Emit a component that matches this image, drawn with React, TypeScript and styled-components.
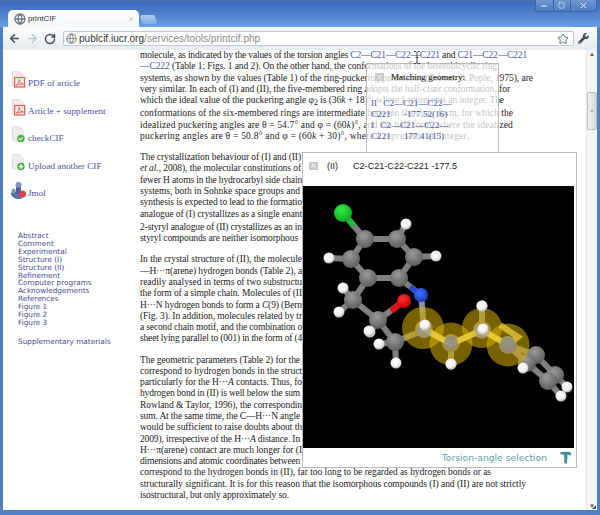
import React, { useLayoutEffect, useRef } from 'react'
import styled, { createGlobalStyle } from 'styled-components'
import { ArrowLeft, ArrowRight, RotateCw, Star, Globe, X, Minus, Square } from 'lucide-react'
import { FaWrench } from 'react-icons/fa'

const Global = createGlobalStyle`
  html, body { margin: 0; padding: 0; background: #fff; }
`
const Window = styled.div`
  width: 600px;
  height: 515px;
  display: flex;
  flex-direction: column;
  overflow: hidden;
  background: #4f80c4;
  font-family: "Liberation Serif", serif;
`
const TitleBar = styled.div`
  height: 27px;
  flex: none;
  display: flex;
  align-items: flex-end;
  gap: 2px;
  padding: 0 4px 0 8px;
  position: relative;
  background: linear-gradient(#56749c 0, #3d6cc0 2px, #4a7cc9 12px, #6c9fdf 27px);
`
const Tab = styled.div`
  width: 121px;
  height: 17px;
  display: flex;
  align-items: center;
  gap: 2px;
  padding: 0 4px 0 6px;
  border-radius: 5px 5px 0 0;
  background: linear-gradient(#fff, #f4f6f9);
  font: 8px "Liberation Sans", sans-serif;
  color: #333;
`
const TabTitle = styled.span`
  flex: 1;
`
const NewTab = styled.div`
  width: 15px;
  height: 9px;
  margin-bottom: 3px;
  transform: skewX(14deg);
  border-radius: 2px;
  background: linear-gradient(#a9c8ef, #83aee4);
`
const WindowControls = styled.div`
  position: absolute;
  top: 0;
  right: 3px;
  width: 60px;
  height: 11px;
  display: flex;
  border: 1px solid #3a64a4;
  border-top: none;
  border-radius: 0 0 3px 3px;
  background: linear-gradient(#6f97cf, #4d7dc2);
  color: #e8f0fa;
`
const ControlButton = styled.div<{ $wide?: boolean }>`
  flex: ${p => (p.$wide ? 1.5 : 1)};
  display: flex;
  align-items: center;
  justify-content: center;
  & + & { border-left: 1px solid #3a64a4; }
`
const Toolbar = styled.div`
  height: 23px;
  flex: none;
  display: flex;
  align-items: center;
  margin: 0 3px;
  padding: 0 5px 0 2px;
  background: linear-gradient(#fbfcfd, #e8ebf0);
  color: #555;
`
const NavButton = styled.div<{ $off?: boolean }>`
  width: 18px;
  display: flex;
  justify-content: center;
  color: ${p => (p.$off ? '#c4c8ce' : '#4b4f55')};
`
const Omnibox = styled.div`
  height: 15px;
  margin-left: 4px;
  flex: 1;
  display: flex;
  align-items: center;
  gap: 2px;
  padding: 0 4px 0 2px;
  box-sizing: border-box;
  background: #fff;
  border: 1px solid #c3c9d2;
  border-radius: 2px;
  font: 10.1px "Liberation Sans", sans-serif;
  color: #8b8b8b;
  white-space: nowrap;
`
const Host = styled.span`
  color: #333;
`
const UrlText = styled.span`
  flex: 1;
`
const Content = styled.div`
  flex: 1;
  position: relative;
  display: flex;
  margin: 0 3px 5px;
  background: #fff;
  overflow: hidden;
`
const Sidebar = styled.nav`
  width: 137px;
  flex: none;
  box-sizing: border-box;
  padding: 21px 0 0 9px;
`
const ToolLink = styled.div`
  height: 27.6px;
  display: flex;
  align-items: flex-start;
  font-size: 9.2px;
  color: #4d4f9e;
  white-space: nowrap;
`
const ToolText = styled.span`
  margin-top: 7px;
`
const SectionList = styled.div`
  margin: 23px 0 0 6px;
  font: 7.3px/7.9px "DejaVu Sans", sans-serif;
  color: #4c4a94;
`
const SectionGap = styled.div`
  margin-top: 11px;
`
const Article = styled.article`
  flex: 1;
  overflow: hidden;
  font-size: 9.5px;
  color: #222;
`
const Para = styled.div`
  margin-bottom: 9.8px;
`
const LineRow = styled.div<{ $tall?: boolean }>`
  height: 11.3px;
  line-height: 11.3px;
  overflow: hidden;
  white-space: nowrap;
  margin-top: ${p => (p.$tall ? '2px' : '0')};
`
const Ref = styled.span`
  color: #4a55b0;
`
const Sub = styled.span`
  font-size: 8px;
  position: relative;
  top: 2px;
`
const Scrollbar = styled.div`
  width: 10px;
  flex: none;
  display: flex;
  flex-direction: column;
  align-items: center;
  justify-content: space-between;
  position: relative;
  background: #f4f5f6;
  border-left: 1px solid #e4e6e8;
  font-size: 6px;
  color: #555;
  line-height: 8px;
`
const Thumb = styled.div`
  position: absolute;
  top: 42px;
  left: 0;
  right: 0;
  height: 38px;
  display: flex;
  align-items: center;
  justify-content: center;
  box-sizing: border-box;
  border: 1px solid #bcc0c5;
  border-radius: 2px;
  background: linear-gradient(90deg, #f2f2f2, #d6d8da);
  color: #8a8a8a;
`
const Popup = styled.div`
  position: absolute;
  box-sizing: border-box;
  border: 1px solid #b9b9b9;
`
const MatchPopup = styled(Popup)`
  left: 363px;
  top: 13px;
  width: 133px;
  height: 101px;
  padding: 6px 0 0 4px;
  background: rgba(255, 255, 255, 0.72);
  color: #222;
`
const PopupHead = styled.div`
  height: 14px;
  display: flex;
  align-items: center;
  padding-left: 4px;
  font-size: 9.1px;
  -webkit-text-stroke: 0.1px #222;
`
const CloseBox = styled.div`
  width: 9px;
  height: 8px;
  flex: none;
  display: flex;
  align-items: center;
  justify-content: center;
  background: #c9c9c9;
  color: #fff;
`
const MatchTitle = styled.span`
  margin-left: 7px;
`
const MatchList = styled.div`
  margin-top: 13.5px;
  font-size: 9.1px;
  color: #4a55b0;
  line-height: 11.3px;
  word-spacing: 4px;
`
const MatchValue = styled.span`
  margin-left: 7px;
`
const ViewerPopup = styled(Popup)`
  left: 299px;
  top: 102px;
  width: 275px;
  height: 316px;
  background: #fff;
  display: flex;
  flex-direction: column;
`
const ViewerHead = styled.div`
  height: 33px;
  flex: none;
  box-sizing: border-box;
  display: flex;
  align-items: center;
  padding: 0 0 8px 6px;
  font: 9.1px "Liberation Sans", sans-serif;
  color: #222;
`
const ViewerTag = styled.span`
  margin-left: 9px;
  width: 26px;
`
const Canvas = styled.div`
  width: 271px;
  height: 262px;
  flex: none;
  background: #000;
`
const ViewerFoot = styled.div`
  flex: 1;
  display: flex;
  align-items: center;
  justify-content: flex-end;
  gap: 12px;
  padding: 0 4px 0 0;
  font: 9.2px "DejaVu Sans", sans-serif;
  color: #5f9fa8;
`
const Cursor = styled.svg`
  position: absolute;
  left: 410px;
  top: 1px;
`
const Grip = styled.svg`
  position: absolute;
  right: 0;
  bottom: 0;
`
const JmolMark = styled.svg`
  margin-left: -2px;
`

// the text is tracked at run time so the line stops where it stops in the picture
const Line = ({ end, tall, children }: { end: number; tall?: boolean; children: React.ReactNode }) => {
  const ref = useRef<HTMLSpanElement>(null)
  useLayoutEffect(() => {
    const el = ref.current
    if (!el) return
    const natural = el.getBoundingClientRect().width
    el.style.letterSpacing = `${(end - natural) / (el.textContent || ' ').length}px`
  }, [end])
  return (
    <LineRow $tall={tall}>
      <span ref={ref}>{children}</span>
    </LineRow>
  )
}

const DocIcon = ({ kind }: { kind: 'pdf' | 'ok' | 'plus' }) => (
  <svg width="16" height="18" viewBox="0 0 16 18">
    <path d="M.5.5h7l3.500 3.500v11H.5z" fill="#ededed" stroke="#dedede" />
    {kind === 'pdf' && (
      <g>
        <rect x="2.600" y="6.500" width="10" height="9.500" fill="#fbeaea" stroke="#e2645e" strokeWidth="1.300" />
        <path d="M4 14.500c2-1 3.200-3.500 3-6 .4 2.500 2 4 4.500 4.500-2.500-.2-5.500.2-7.500 1.500z" fill="none" stroke="#e2645e" strokeWidth="1" />
      </g>
    )}
    {kind === 'ok' && (
      <g>
        <circle cx="9" cy="12.500" r="3.700" fill="#48b13f" />
        <path d="M7 12.500l1.500 1.500 2.500-3" fill="none" stroke="#fff" strokeWidth="1.100" />
      </g>
    )}
    {kind === 'plus' && (
      <g>
        <circle cx="9" cy="12.500" r="3.700" fill="#48b13f" />
        <path d="M9 10.300v4.400M6.800 12.500h4.400" stroke="#fff" strokeWidth="1.400" />
      </g>
    )}
  </svg>
)

const JmolIcon = () => (
  <JmolMark width="18" height="20" viewBox="0 0 18 20">
    <path d="M1 12c2-2 4-2 6-1l6 2c1 3-1 5-4 5-4 0-8-2-8-6z" fill="#5a6fb0" />
    <rect x="6" y="2" width="5" height="11" rx="2.500" fill="#4a5ca8" />
    <circle cx="8.500" cy="4" r="3" fill="#7f8fce" />
    <circle cx="12.500" cy="13" r="3.500" fill="#e0404a" />
    <circle cx="3.500" cy="10" r="2.200" fill="#8a94b8" />
  </JmolMark>
)

const bonds: [number, number, number, number][] = [
  [343, 213, 365, 239], [365, 239, 397, 239], [397, 239, 406, 224], [397, 239, 414, 257],
  [414, 257, 436, 256], [414, 257, 399, 278], [399, 278, 368, 278], [368, 278, 351, 259],
  [351, 259, 365, 239], [351, 259, 329, 258], [399, 278, 421, 295], [368, 278, 353, 300],
  [353, 300, 343, 288], [353, 300, 339, 312], [353, 300, 378, 320], [378, 320, 404, 301],
  [378, 320, 370, 332], [378, 320, 395, 342], [395, 342, 379, 344], [395, 342, 396, 363],
  [395, 342, 424, 330], [421, 295, 424, 330], [424, 330, 451, 344], [451, 344, 451, 364],
  [451, 344, 482, 330], [482, 330, 482, 306], [482, 330, 508, 345], [508, 345, 527, 363],
  [527, 363, 548, 381], [508, 345, 536, 355], [536, 355, 555, 375], [548, 381, 555, 375],
  [548, 381, 561, 396], [555, 375, 567, 387],
]

const carbons: [number, number][] = [
  [365, 239], [397, 239], [414, 257], [399, 278], [368, 278], [351, 259],
  [353, 300], [378, 320], [395, 342], [424, 329], [451, 343], [482, 330],
  [508, 345], [536, 355], [555, 375], [548, 381], [527, 363],
]

const hydrogens: [number, number][] = [
  [406, 224], [436, 256], [329, 258], [343, 288], [339, 312], [370, 332], [379, 344], [396, 363],
  [369, 331], [425, 326], [451, 364], [482, 306], [483, 330], [523, 368], [561, 396], [567, 387],
]

const Molecule = () => (
  <svg width="271" height="262" viewBox="303 186 271 262">
    <defs>
      <radialGradient id="c" cx="42%" cy="32%" r="72%">
        <stop offset="0" stopColor="#9a9a9a" />
        <stop offset="1" stopColor="#5a5a5a" />
      </radialGradient>
      <radialGradient id="h" cx="42%" cy="38%" r="70%">
        <stop offset="0" stopColor="#fff" />
        <stop offset="0.6" stopColor="#eee" />
        <stop offset="1" stopColor="#a0a0a0" />
      </radialGradient>
      <radialGradient id="cl" cx="40%" cy="35%" r="70%">
        <stop offset="0" stopColor="#30f040" />
        <stop offset="1" stopColor="#10a020" />
      </radialGradient>
      <radialGradient id="n" cx="40%" cy="35%" r="70%">
        <stop offset="0" stopColor="#4070ff" />
        <stop offset="1" stopColor="#1838c0" />
      </radialGradient>
      <radialGradient id="o" cx="40%" cy="35%" r="70%">
        <stop offset="0" stopColor="#ff3030" />
        <stop offset="1" stopColor="#c00000" />
      </radialGradient>
    </defs>
    {bonds.map(([a, b, c, d], i) => (
      <line key={i} x1={a} y1={b} x2={c} y2={d} stroke="#808080" strokeWidth="6" />
    ))}
    <line x1="343" y1="213" x2="354" y2="226" stroke="#20c030" strokeWidth="6" />
    <line x1="421" y1="295" x2="410" y2="287" stroke="#2848d8" strokeWidth="5" />
    <line x1="404" y1="301" x2="391" y2="311" stroke="#e01010" strokeWidth="6" />
    <line x1="421" y1="295" x2="423" y2="312" stroke="#8a90a8" strokeWidth="5" />
    {carbons.map(([x, y], i) => (
      <circle key={i} cx={x} cy={y} r="9" fill="url(#c)" />
    ))}
    <circle cx="343" cy="213" r="9" fill="url(#cl)" />
    <circle cx="421" cy="295" r="7" fill="url(#n)" />
    <circle cx="404" cy="301" r="7" fill="url(#o)" />
    {hydrogens.map(([x, y], i) => (
      <circle key={i} cx={x} cy={y} r="5.500" fill="url(#h)" />
    ))}
    <g fill="#d8b000" fillOpacity="0.55">
      <circle cx="423" cy="328" r="21" />
      <circle cx="451" cy="344" r="21.500" />
      <circle cx="482" cy="328" r="20" />
      <circle cx="508" cy="345" r="21.500" />
    </g>
    <path d="M423 328L451 344L482 330L508 345L518 337L500 325" fill="none" stroke="#f4d440" strokeOpacity="0.7" strokeWidth="6" />
    <circle cx="424" cy="331" r="7" fill="#9a9a9a" fillOpacity="0.7" />
    <circle cx="425" cy="325" r="5.500" fill="url(#h)" />
    <circle cx="451" cy="343" r="7" fill="#8a8a8a" fillOpacity="0.8" />
    <circle cx="451" cy="364" r="5.500" fill="url(#h)" />
    <circle cx="482" cy="331" r="7" fill="#a0a0a0" fillOpacity="0.6" />
    <circle cx="483" cy="329" r="5.500" fill="url(#h)" />
    <circle cx="508" cy="345" r="8" fill="#8a8a8a" fillOpacity="0.85" />
    <circle cx="482" cy="306" r="5.500" fill="url(#h)" />
  </svg>
)

const SECTIONS = [
  'Abstract', 'Comment', 'Experimental', 'Structure (I)', 'Structure (II)', 'Refinement',
  'Computer programs', 'Acknowledgements', 'References', 'Figure 1', 'Figure 2', 'Figure 3',
]

const App = () => (
  <Window>
    <Global />
    <TitleBar>
      <Tab>
        <Globe size={12} strokeWidth={2.6} color="#74787e" />
        <TabTitle>printCIF</TabTitle>
        <X size={8} color="#a8a8a8" />
      </Tab>
      <NewTab />
      <WindowControls>
        <ControlButton><Minus size={8} strokeWidth={3} /></ControlButton>
        <ControlButton><Square size={7} strokeWidth={2} /></ControlButton>
        <ControlButton $wide><X size={9} strokeWidth={2.5} /></ControlButton>
      </WindowControls>
    </TitleBar>
    <Toolbar>
      <NavButton><ArrowLeft size={13} strokeWidth={3} /></NavButton>
      <NavButton $off><ArrowRight size={13} strokeWidth={3} /></NavButton>
      <NavButton><RotateCw size={12} strokeWidth={3} /></NavButton>
      <Omnibox>
        <Globe size={11} strokeWidth={2.6} color="#8b8f95" />
        <UrlText><Host>publcif.iucr.org</Host>/services/tools/printcif.php</UrlText>
        <Star size={12} strokeWidth={2} color="#5a6a80" />
      </Omnibox>
      <NavButton><FaWrench size={11} /></NavButton>
    </Toolbar>
    <Content>
      <Sidebar>
        <ToolLink><DocIcon kind="pdf" /><ToolText>PDF of article</ToolText></ToolLink>
        <ToolLink><DocIcon kind="pdf" /><ToolText>Article + supplement</ToolText></ToolLink>
        <ToolLink><DocIcon kind="ok" /><ToolText>checkCIF</ToolText></ToolLink>
        <ToolLink><DocIcon kind="plus" /><ToolText>Upload another CIF</ToolText></ToolLink>
        <ToolLink><JmolIcon /><ToolText>Jmol</ToolText></ToolLink>
        <SectionList>
          {SECTIONS.map(s => <div key={s}>{s}</div>)}
          <SectionGap>Supplementary materials</SectionGap>
        </SectionList>
      </Sidebar>
      <Article>
        <Para>
          <Line end={387}>molecule, as indicated by the values of the torsion angles <Ref>C2—C21—C22—C221</Ref> and <Ref>C21—C22—C221</Ref></Line>
          <Line end={357}><Ref>—C222</Ref> (Table 1; Figs. 1 and 2). On the other hand, the conformations of the heterobicyclic ring</Line>
          <Line end={393}>systems, as shown by the values (Table 1) of the ring-puckering parameters (Cremer &amp; Pople, 1975), are</Line>
          <Line end={370}>very similar. In each of (I) and (II), the five-membered ring adopts the half-chair conformation, for</Line>
          <Line end={364}>which the ideal value of the puckering angle φ<Sub>2</Sub> is (36<i>k</i> + 18)°, where <i>k</i> represents an integer. The</Line>
          <Line tall end={373}>conformations of the six-membered rings are intermediate between the chair form, for which the</Line>
          <Line end={373}>idealized puckering angles are θ = 54.7° and φ = (60<i>k</i>)°, and the half form, where the idealized</Line>
          <Line end={329}>puckering angles are θ = 50.8° and φ = (60<i>k</i> + 30)°, where <i>k</i> represents an integer.</Line>
        </Para>
        <Para>
          <Line end={161}>The crystallization behaviour of (I) and (II)</Line>
          <Line end={161}><i>et al.</i>, 2008), the molecular constitutions of</Line>
          <Line end={162}>fewer H atoms in the hydrocarbyl side chain</Line>
          <Line end={160}>systems, both in Sohnke space groups and</Line>
          <Line end={162}>synthesis is expected to lead to the formatio</Line>
          <Line end={162}>analogue of (I) crystallizes as a single enant</Line>
          <Line tall end={162}>2-styryl analogue of (II) crystallizes as an in</Line>
          <Line end={158}>styryl compounds are neither isomorphous</Line>
        </Para>
        <Para>
          <Line end={162}>In the crystal structure of (II), the molecule</Line>
          <Line end={162}>—H···π(arene) hydrogen bonds (Table 2), a</Line>
          <Line end={162}>readily analysed in terms of two substructu</Line>
          <Line end={162}>the form of a simple chain. Molecules of (II</Line>
          <Line end={162}>H···N hydrogen bonds to form a <i>C</i>(9) (Bern</Line>
          <Line end={162}>(Fig. 3). In addition, molecules related by tr</Line>
          <Line end={162}>a second chain motif, and the combination o</Line>
          <Line end={162}>sheet lying parallel to (001) in the form of (4</Line>
        </Para>
        <Para>
          <Line end={160}>The geometric parameters (Table 2) for the</Line>
          <Line end={162}>correspond to hydrogen bonds in the struct</Line>
          <Line end={162}>particularly for the H···<i>A</i> contacts. Thus, fo</Line>
          <Line end={160}>hydrogen bond in (II) is well below the sum</Line>
          <Line end={162}>Rowland &amp; Taylor, 1996), the correspondin</Line>
          <Line end={160}>sum. At the same time, the C—H···N angle</Line>
          <Line end={162}>would be sufficient to raise doubts about th</Line>
          <Line end={160}>2009), irrespective of the H···<i>A</i> distance. In</Line>
          <Line end={162}>H···π(arene) contact are much longer for (I</Line>
          <Line end={160}>dimensions and atomic coordinates between</Line>
          <Line end={351}>correspond to the hydrogen bonds in (II), far too long to be regarded as hydrogen bonds or as</Line>
          <Line end={386}>structurally significant. It is for this reason that the isomorphous compounds (I) and (II) are not strictly</Line>
          <Line end={149}>isostructural, but only approximately so.</Line>
        </Para>
      </Article>
      <Scrollbar>
        <span>▲</span>
        <Thumb>≡</Thumb>
        <span>▼</span>
      </Scrollbar>
      <MatchPopup>
        <PopupHead>
          <CloseBox><X size={7} strokeWidth={3} /></CloseBox>
          <MatchTitle>Matching geometry:</MatchTitle>
        </PopupHead>
        <MatchList>
          <div>II C2—C21—C22—</div>
          <div>C221<MatchValue> -177.52(16)</MatchValue></div>
          <div>I C2—C21—C22—</div>
          <div>C221<MatchValue> 177.41(15)</MatchValue></div>
        </MatchList>
      </MatchPopup>
      <ViewerPopup>
        <ViewerHead>
          <CloseBox><X size={7} strokeWidth={3} /></CloseBox>
          <ViewerTag>(II)</ViewerTag>
          <span>C2-C21-C22-C221 -177.5</span>
        </ViewerHead>
        <Canvas><Molecule /></Canvas>
        <ViewerFoot>
          <span>Torsion-angle selection</span>
          <svg width="13" height="13" viewBox="0 0 13 13">
            <path d="M1 1.500C3 .5 10 .5 12 1.500V4.500L8.500 3.500 8 12.500H5.500L5 3.500 2 3.500z" fill="#3f8f96" />
          </svg>
        </ViewerFoot>
      </ViewerPopup>
      <Cursor width="8" height="13" viewBox="0 0 8 13">
        <path d="M1 .5h2l1 1 1-1h2M4 1.500v10M1 12.500h2l1-1 1 1h2M2.500 6.500h3" fill="none" stroke="#444" />
      </Cursor>
      <Grip width="6" height="6" viewBox="0 0 6 6">
        <path d="M5 1v4H1z" fill="#555" />
      </Grip>
    </Content>
  </Window>
)

export default App
